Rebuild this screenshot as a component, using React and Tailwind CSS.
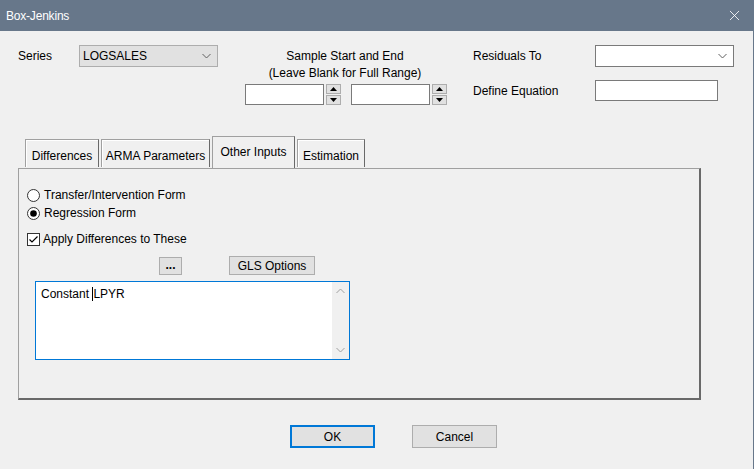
import { X } from "lucide-react";

const font = { fontFamily: '"Liberation Sans", Arial, sans-serif' };

function Chevron({ up = false, className = "" }) {
    return (
        <svg width="9" height="6" viewBox="0 0 9 6" className={className}>
            <path
                d={up ? "M0.5 5 L4.5 1 L8.5 5" : "M0.5 1 L4.5 5 L8.5 1"}
                fill="none"
                stroke="currentColor"
                strokeWidth="1"
            />
        </svg>
    );
}

function SpinBox() {
    return (
        <div className="flex items-start gap-[2px]">
            <div className="w-[79px] h-[21px] bg-white border border-[#7a7a7a]" />
            <div className="flex flex-col gap-[1px]">
                <div className="w-[15px] h-[10px] bg-[#e1e1e1] border border-[#adadad] flex items-center justify-center">
                    <svg width="7" height="4" viewBox="0 0 7 4"><path d="M0 4 L3.5 0 L7 4 Z" fill="#000" /></svg>
                </div>
                <div className="w-[15px] h-[10px] bg-[#e1e1e1] border border-[#adadad] flex items-center justify-center">
                    <svg width="7" height="4" viewBox="0 0 7 4"><path d="M0 0 L3.5 4 L7 0 Z" fill="#000" /></svg>
                </div>
            </div>
        </div>
    );
}

function Tab({ label, width, active = false }) {
    if (active) {
        return (
            <div className={`relative z-10 h-[32px] -mb-[1px] ${width} text-center pt-[6px] bg-[#f0f0f0] border border-b-0 border-[#a0a0a0] border-r-[#696969]`}>
                {label}
            </div>
        );
    }
    return (
        <div className={`h-[28px] mt-[3px] ${width} text-center pt-[7px] bg-[#f0f0f0] border border-b-0 border-[#a0a0a0] border-r-[#696969] shadow-[inset_1px_1px_0_#ffffff]`}>
            {label}
        </div>
    );
}

export default function App() {
    return (
        <div style={font} className="w-[754px] h-[469px] bg-[#f0f0f0] text-[12px] text-black border-r border-[#67778a] flex flex-col overflow-hidden">

            {/* title bar */}
            <div className="h-[31px] bg-[#67778a] flex items-center justify-between pl-[6px] pr-[10px] text-white">
                <span className="text-[12px] tracking-[-0.2px]">Box-Jenkins</span>
                <X size={17} strokeWidth={1.2} />
            </div>

            {/* top controls */}
            <div className="flex items-start pl-[18px] pt-[14px] h-[91px]">
                <div className="w-[61px] leading-[22px]">Series</div>
                <div className="w-[139px] h-[22px] bg-[#e1e1e1] border border-[#adadad] flex items-center justify-between pl-[3px] pr-[6px]">
                    <span>LOGSALES</span>
                    <Chevron className="text-[#606060]" />
                </div>

                <div className="ml-[27px] w-[200px] flex flex-col items-center">
                    <div className="leading-[17px] mt-[3px] text-center">
                        Sample Start and End
                        <br />
                        (Leave Blank for Full Range)
                    </div>
                    <div className="flex gap-[10px] mt-[2px] w-full">
                        <SpinBox />
                        <SpinBox />
                    </div>
                </div>

                <div className="ml-[28px] flex flex-col">
                    <div className="flex items-center h-[22px]">
                        <div className="w-[122px]">Residuals To</div>
                        <div className="w-[139px] h-[22px] bg-white border border-[#7a7a7a] flex items-center justify-end pr-[6px]">
                            <Chevron className="text-[#606060]" />
                        </div>
                    </div>
                    <div className="flex items-center h-[21px] mt-[13px]">
                        <div className="w-[122px]">Define Equation</div>
                        <div className="w-[123px] h-[21px] bg-white border border-[#7a7a7a]" />
                    </div>
                </div>
            </div>

            {/* tabs */}
            <div className="ml-[25px] flex items-start gap-[2px] h-[32px] mt-[14px]">
                <Tab label="Differences" width="w-[74px]" />
                <Tab label="ARMA Parameters" width="w-[109px]" />
                <Tab label="Other Inputs" width="w-[83px]" active />
                <Tab label="Estimation" width="w-[68px]" />
            </div>

            {/* tab panel */}
            <div className="ml-[18px] w-[683px] h-[232px] border border-[#a0a0a0] border-r-2 border-b-2 border-r-[#696969] border-b-[#696969] pl-[8px] pt-[17px]">
                <div className="flex items-center gap-[4px] h-[18px]">
                    <svg width="13" height="13" viewBox="0 0 13 13">
                        <circle cx="6.5" cy="6.5" r="6" fill="#fff" stroke="#333" strokeWidth="1" />
                    </svg>
                    <span>Transfer/Intervention Form</span>
                </div>
                <div className="flex items-center gap-[4px] h-[18px]">
                    <svg width="13" height="13" viewBox="0 0 13 13">
                        <circle cx="6.5" cy="6.5" r="6" fill="#fff" stroke="#333" strokeWidth="1" />
                        <circle cx="6.5" cy="6.5" r="3.3" fill="#000" />
                    </svg>
                    <span>Regression Form</span>
                </div>
                <div className="flex items-center gap-[3px] h-[18px] mt-[8px]">
                    <svg width="13" height="13" viewBox="0 0 13 13">
                        <rect x="0.5" y="0.5" width="12" height="12" fill="#fff" stroke="#333" strokeWidth="1" />
                        <path d="M2.5 6.5 L5 9 L10.5 3.5" fill="none" stroke="#000" strokeWidth="1.2" />
                    </svg>
                    <span>Apply Differences to These</span>
                </div>

                <div className="flex items-center h-[19px] mt-[8px]">
                    <div className="ml-[132px] w-[23px] h-[18px] mt-[1px] bg-[#e1e1e1] border border-[#adadad] flex items-center justify-center leading-none pb-[3px] font-bold">
                        ...
                    </div>
                    <div className="ml-[47px] w-[86px] h-[19px] bg-[#e1e1e1] border border-[#adadad] flex items-center justify-center">
                        GLS Options
                    </div>
                </div>

                <div className="ml-[8px] mt-[6px] w-[315px] h-[79px] bg-white border border-[#0078d7] flex">
                    <div className="flex-1 pl-[5px] pt-[4px] leading-[16px]">
                        Constant <span className="border-l border-black">LPYR</span>
                    </div>
                    <div className="w-[17px] bg-[#f0f0f0] flex flex-col items-center justify-between py-[6px] text-[#a0a0a0]">
                        <Chevron up />
                        <Chevron />
                    </div>
                </div>
            </div>

            {/* buttons */}
            <div className="flex justify-center gap-[37px] mt-[25px] pl-[34px]">
                <div className="w-[85px] h-[23px] bg-[#e1e1e1] border-2 border-[#0078d7] flex items-center justify-center">OK</div>
                <div className="w-[85px] h-[23px] bg-[#e1e1e1] border border-[#adadad] flex items-center justify-center">Cancel</div>
            </div>
        </div>
    );
}
